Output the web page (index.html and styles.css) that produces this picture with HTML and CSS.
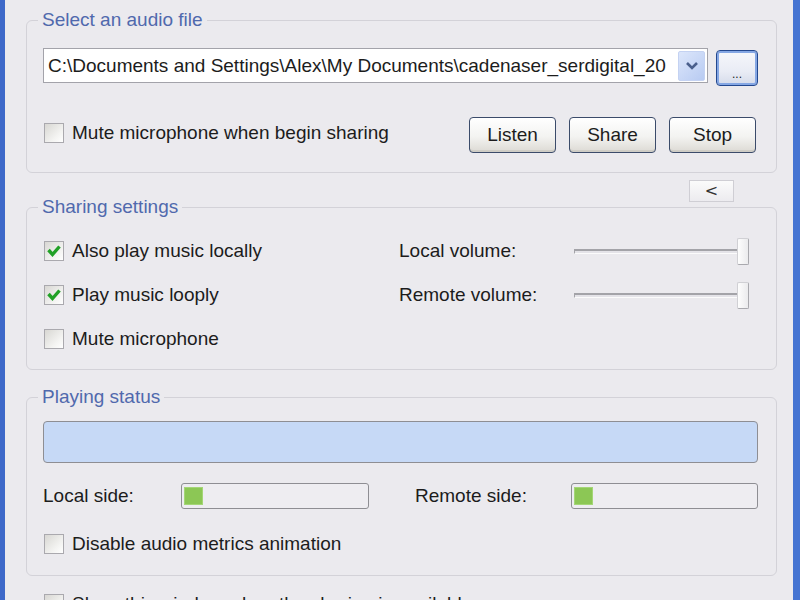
FILE: index.html
```html
<!DOCTYPE html>
<html lang="en">
<head>
    <meta charset="UTF-8">
    <title>Audio sharing</title>
    <link rel="stylesheet" href="styles.css">
</head>
<body>
    <div class="window">
        <fieldset class="group group-file">
            <legend>Select an audio file</legend>
            <div class="file-row">
                <div class="combo">
                    <span class="combo-text">C:\Documents and Settings\Alex\My Documents\cadenaser_serdigital_20</span>
                    <span class="combo-arrow">
                        <svg width="14" height="10" viewBox="0 0 14 10"><path d="M2 2 L7 7 L12 2" fill="none" stroke="#4a5f8c" stroke-width="2.6"/></svg>
                    </span>
                </div>
                <button class="btn btn-browse">...</button>
            </div>
            <div class="action-row">
                <label class="check check-top"><span class="box"></span>Mute microphone when begin sharing</label>
                <div class="actions">
                    <button class="btn">Listen</button>
                    <button class="btn">Share</button>
                    <button class="btn">Stop</button>
                </div>
            </div>
        </fieldset>

        <div class="toggle-row">
            <button class="btn-toggle">&lt;</button>
        </div>

        <fieldset class="group group-sharing">
            <legend>Sharing settings</legend>
            <div class="sharing-grid">
                <label class="check"><span class="box checked"><svg width="18" height="18" viewBox="0 0 18 18"><path d="M3.5 8 L7.5 12.5 L14.5 4.5" fill="none" stroke="#21a126" stroke-width="3.4"/></svg></span>Also play music locally</label>
                <span class="vol-label">Local volume:</span>
                <div class="slider"><span class="track"></span><span class="thumb"></span></div>

                <label class="check"><span class="box checked"><svg width="18" height="18" viewBox="0 0 18 18"><path d="M3.5 8 L7.5 12.5 L14.5 4.5" fill="none" stroke="#21a126" stroke-width="3.4"/></svg></span>Play music looply</label>
                <span class="vol-label">Remote volume:</span>
                <div class="slider"><span class="track"></span><span class="thumb"></span></div>

                <label class="check"><span class="box"></span>Mute microphone</label>
            </div>
        </fieldset>

        <fieldset class="group group-status">
            <legend>Playing status</legend>
            <div class="status-bar"></div>
            <div class="meter-row">
                <span class="meter-label">Local side:</span>
                <div class="meter"><span class="meter-fill"></span></div>
                <span class="meter-label meter-label-right">Remote side:</span>
                <div class="meter meter-right"><span class="meter-fill"></span></div>
            </div>
            <label class="check check-anim"><span class="box"></span>Disable audio metrics animation</label>
        </fieldset>

        <label class="check check-bottom"><span class="box"></span>Show this window when the sharing is available</label>
    </div>
</body>
</html>
```

FILE: styles.css
```css
body {
    margin: 0;
    background-color: #ebeaee;
    font-family: 'Liberation Sans', Arial, sans-serif;
    font-size: 19px;
    color: #1c1c1c;
    overflow: hidden;
}

.window {
    height: 600px;
    box-sizing: border-box;
    border-left: 5px solid #3e69c9;
    border-right: 7px solid #4574d2;
    padding: 9px 16px 0 21px;
    overflow: hidden;
}

.group {
    margin: 0;
    min-width: 0;
    border: 1px solid #d3d2d8;
    border-radius: 6px;
}

.group legend {
    color: #5069ad;
    line-height: 22px;
    padding: 0 4px;
    margin-left: -5px;
}

.group-file {
    padding: 17px 18px 19px 16px;
}

.file-row {
    display: flex;
    gap: 8px;
    align-items: flex-start;
}

.combo {
    flex: 1;
    height: 35px;
    box-sizing: border-box;
    display: flex;
    align-items: center;
    background-color: #fff;
    border: 1px solid #a3a3aa;
    padding-left: 4px;
    overflow: hidden;
}

.combo-text {
    flex: 1;
    white-space: nowrap;
    overflow: hidden;
}

.combo-arrow {
    width: 25px;
    height: 28px;
    margin-right: 2px;
    display: flex;
    align-items: center;
    justify-content: center;
    background: linear-gradient(135deg, #dce6fb, #b8cbf2);
    border: 1px solid #c4d2f2;
    border-radius: 2px;
}

.btn {
    font-family: inherit;
    font-size: 19px;
    color: #1c1c1c;
    width: 87px;
    height: 36px;
    padding: 0;
    border: 1px solid #3b4b6a;
    border-radius: 4px;
    background: linear-gradient(#ffffff, #f3f3f1 55%, #dcdad4);
    box-shadow: inset 0 -2px 0 #cfcdc6, inset 0 1px 0 #fff;
}

.btn-browse {
    width: 42px;
    margin-top: 2px;
    font-size: 12px;
    line-height: 12px;
    padding-top: 12px;
    border: 1px solid #23488f;
    box-shadow: inset 0 0 0 2px #85a7e4;
    background: linear-gradient(#f6f7fb, #e9ecf5 60%, #d5dbea);
}

.action-row {
    margin-top: 31px;
    display: flex;
    justify-content: space-between;
    align-items: flex-start;
}

.actions {
    display: flex;
    gap: 13px;
    margin-right: 2px;
}

.check {
    display: flex;
    align-items: center;
    gap: 8px;
    height: 30px;
    margin-left: 1px;
}

.check-top {
    margin-top: 1px;
}

.box {
    width: 20px;
    height: 20px;
    box-sizing: border-box;
    border: 1px solid #aaa9ae;
    background: linear-gradient(135deg, #d8d7d3, #f3f3f1 65%, #ffffff);
    display: flex;
    align-items: center;
    justify-content: center;
}

.toggle-row {
    display: flex;
    justify-content: flex-end;
    margin: 7px 43px -6px 0;
}

.btn-toggle {
    width: 45px;
    height: 22px;
    padding: 0;
    font-family: 'DejaVu Sans', sans-serif;
    font-size: 16px;
    line-height: 20px;
    color: #333;
    border: 1px solid #cfced4;
    background: linear-gradient(#fbfbfb, #ecebef);
}

.group-sharing {
    padding: 18px 27px 15px 16px;
}

.sharing-grid {
    display: grid;
    grid-template-columns: 356px 175px 175px;
    grid-auto-rows: 30px;
    row-gap: 14px;
    align-items: center;
}

.vol-label {
    line-height: 30px;
}

.slider {
    position: relative;
    height: 30px;
    display: flex;
    align-items: center;
}

.track {
    width: 100%;
    height: 5px;
    box-sizing: border-box;
    border-top: 2px solid #a3a3a8;
    border-left: 1px solid #a3a3a8;
    border-bottom: 1px solid #fbfbfb;
    background-color: #e4e3e8;
}

.thumb {
    position: absolute;
    right: 0;
    top: 2px;
    width: 12px;
    height: 27px;
    box-sizing: border-box;
    border: 1px solid #d0d0d4;
    border-right-color: #a9a9ae;
    border-bottom-color: #a9a9ae;
    border-radius: 2px;
    background: linear-gradient(90deg, #fdfdfd, #ebebed);
}

.group-status {
    margin-top: 16px;
    padding: 13px 18px 16px 16px;
}

.status-bar {
    height: 42px;
    box-sizing: border-box;
    border: 1px solid #8e8e93;
    border-radius: 4px;
    background-color: #c6d9f6;
}

.meter-row {
    margin-top: 20px;
    display: flex;
    align-items: center;
    height: 26px;
}

.meter-label {
    width: 138px;
}

.meter-label-right {
    width: 156px;
    margin-left: 46px;
}

.meter {
    width: 188px;
    height: 26px;
    box-sizing: border-box;
    border: 1px solid #8e8e93;
    border-radius: 3px;
    background-color: #eeedf1;
    padding: 3px 2px;
}

.meter-right {
    width: 187px;
}

.meter-fill {
    display: block;
    width: 19px;
    height: 100%;
    background-color: #8cc755;
    box-shadow: inset 0 0 0 1px #a4d676;
}

.check-anim {
    margin-top: 20px;
}

.check-bottom {
    margin: 13px 0 0 18px;
}
```
